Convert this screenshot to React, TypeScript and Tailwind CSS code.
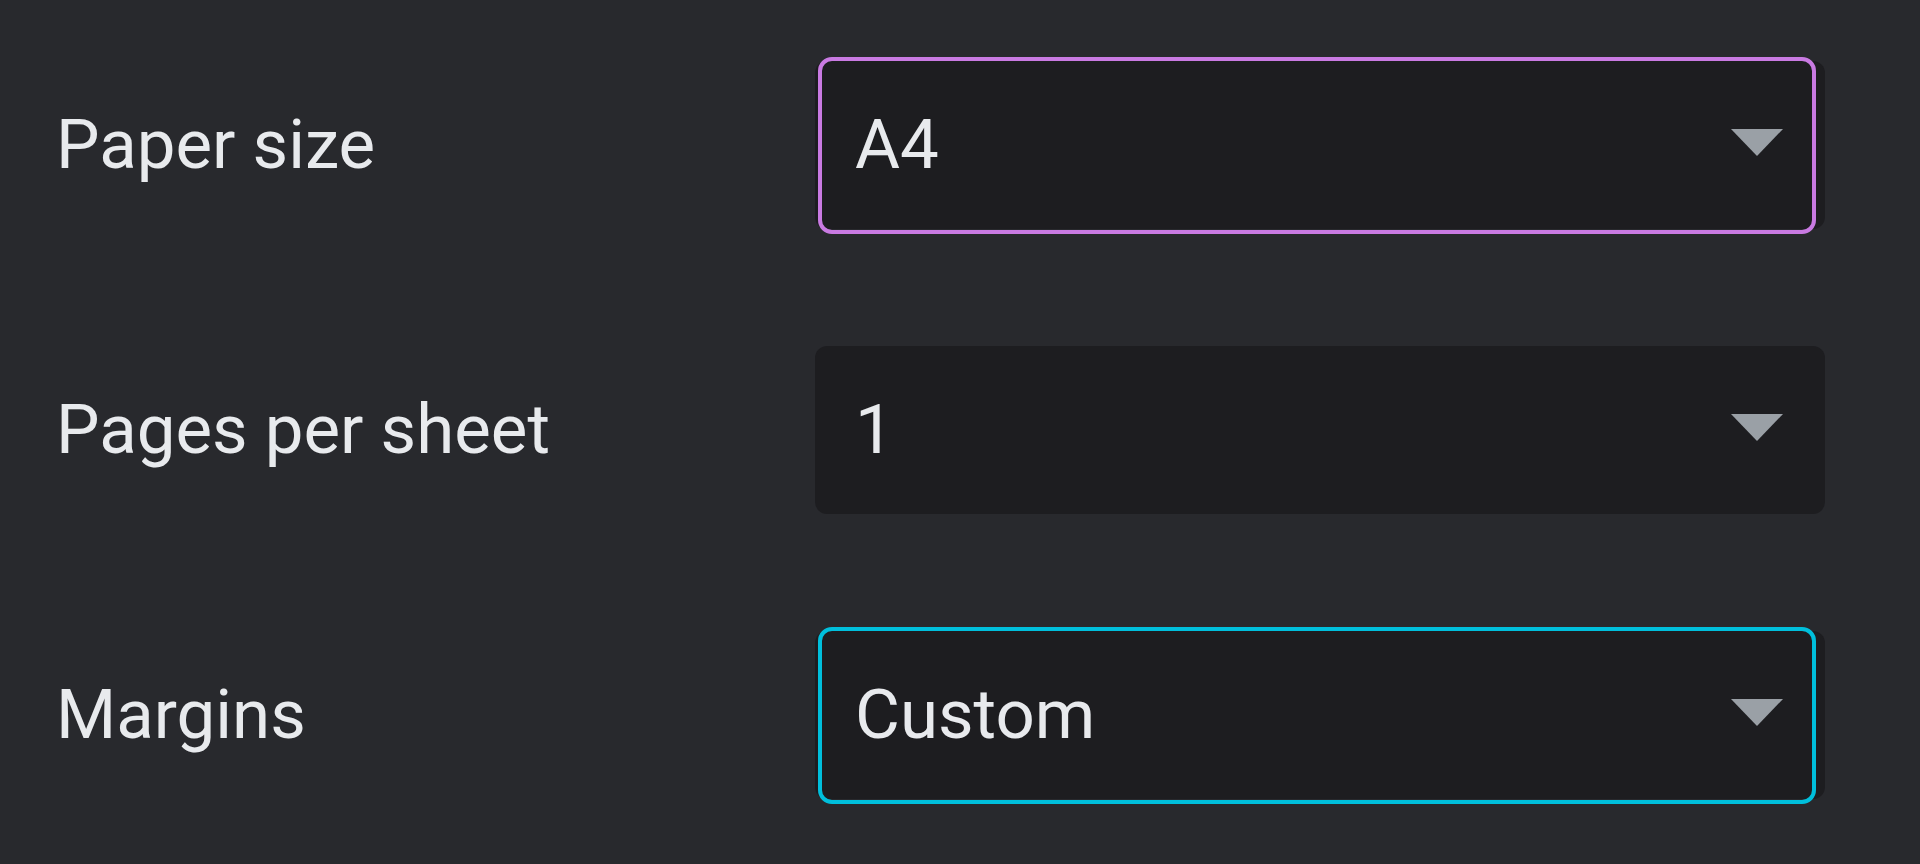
type Row = {
  label: string;
  value: string;
  ring?: string;
};

const rows: Row[] = [
  { label: "Paper size", value: "A4", ring: "border-[#c97ae2]" },
  { label: "Pages per sheet", value: "1" },
  { label: "Margins", value: "Custom", ring: "border-[#00bfdc]" },
];

function Arrow() {
  return (
    <svg width="52" height="27" viewBox="0 0 52 27" className="mb-[5px] shrink-0">
      <polygon points="0,0 52,0 26,27" fill="#9aa0a6" />
    </svg>
  );
}

function SettingRow({ label, value, ring }: Row) {
  return (
    <div className="flex h-[285px] items-center">
      <span className="w-[815px] shrink-0 pl-[56px] text-[69px] leading-none text-[#e8eaed]">
        {label}
      </span>
      <div className="relative h-[168px] w-[1010px] shrink-0">
        <div className="flex h-full items-center justify-between rounded-[12px] bg-[#1d1d20] pl-[40px] pr-[42px]">
          <span className="text-[69px] leading-none text-[#e8eaed]">{value}</span>
          <Arrow />
        </div>
        {ring && (
          <div
            className={`pointer-events-none absolute -top-[4px] -bottom-[5px] left-[3px] right-[9px] rounded-[14px] border-[4px] ${ring}`}
          />
        )}
      </div>
    </div>
  );
}

export default function App() {
  return (
    <div className="h-[864px] w-[1920px] overflow-hidden bg-[#28292d] pt-[2px] font-['Roboto',sans-serif]">
      {rows.map((row) => (
        <SettingRow key={row.label} {...row} />
      ))}
    </div>
  );
}
